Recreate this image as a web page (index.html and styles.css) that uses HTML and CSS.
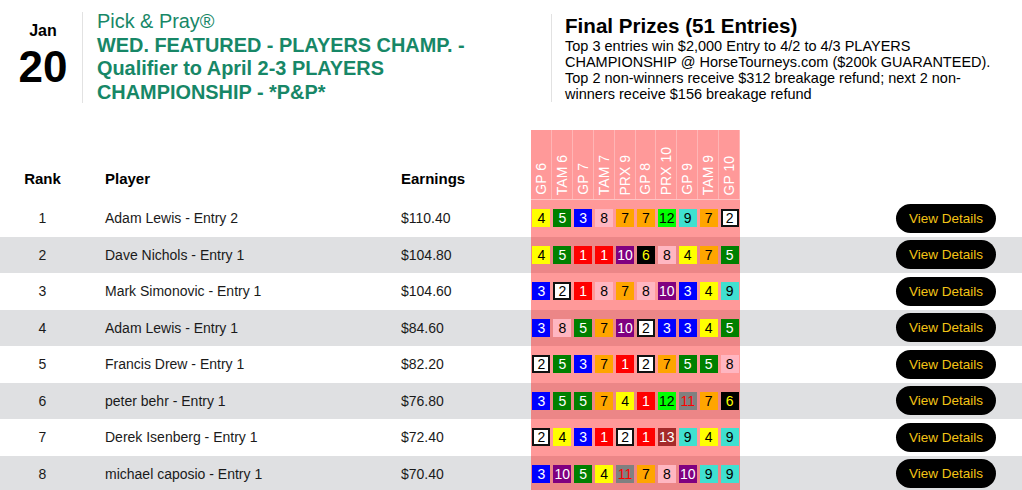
FILE: index.html
```html
<!DOCTYPE html>
<html lang="en">
<head>
<meta charset="utf-8">
<title>Pick &amp; Pray Leaderboard</title>
<link rel="stylesheet" href="styles.css">
</head>
<body>
<header class="top">
  <div class="date">
    <div class="mon">Jan</div>
    <div class="day">20</div>
  </div>
  <div class="title">
    <div class="brand">Pick &amp; Pray®</div>
    <div class="name">WED. FEATURED - PLAYERS CHAMP. - Qualifier to April 2-3 PLAYERS CHAMPIONSHIP - *P&amp;P*</div>
  </div>
  <div class="prizes">
    <h2>Final Prizes (51 Entries)</h2>
    <p>Top 3 entries win $2,000 Entry to 4/2 to 4/3 PLAYERS CHAMPIONSHIP @ HorseTourneys.com ($200k GUARANTEED). Top 2 non-winners receive $312 breakage refund; next 2 non-winners receive $156 breakage refund</p>
  </div>
</header>

<table class="board">
  <colgroup>
    <col class="w-rank"><col class="w-player"><col class="w-earn"><col class="w-picks"><col class="w-act">
  </colgroup>
  <thead>
    <tr>
      <th class="c-rank">Rank</th>
      <th class="c-player">Player</th>
      <th class="c-earn">Earnings</th>
      <th class="c-picks">
        <div class="races">
          <div class="race"><span>GP 6</span></div>
          <div class="race"><span>TAM 6</span></div>
          <div class="race"><span>GP 7</span></div>
          <div class="race"><span>TAM 7</span></div>
          <div class="race"><span>PRX 9</span></div>
          <div class="race"><span>GP 8</span></div>
          <div class="race"><span>PRX 10</span></div>
          <div class="race"><span>GP 9</span></div>
          <div class="race"><span>TAM 9</span></div>
          <div class="race"><span>GP 10</span></div>
        </div>
      </th>
      <th class="c-act"></th>
    </tr>
  </thead>
  <tbody>
    <tr>
      <td class="c-rank">1</td><td class="c-player">Adam Lewis - Entry 2</td><td class="c-earn">$110.40</td>
      <td class="c-picks"><div class="picks"><span class="n4">4</span><span class="n5">5</span><span class="n3">3</span><span class="n8">8</span><span class="n7">7</span><span class="n7">7</span><span class="n12">12</span><span class="n9">9</span><span class="n7">7</span><span class="n2">2</span></div></td>
      <td class="c-act"><button class="btn">View Details</button></td>
    </tr>
    <tr>
      <td class="c-rank">2</td><td class="c-player">Dave Nichols - Entry 1</td><td class="c-earn">$104.80</td>
      <td class="c-picks"><div class="picks"><span class="n4">4</span><span class="n5">5</span><span class="n1">1</span><span class="n1">1</span><span class="n10">10</span><span class="n6">6</span><span class="n8">8</span><span class="n4">4</span><span class="n7">7</span><span class="n5">5</span></div></td>
      <td class="c-act"><button class="btn">View Details</button></td>
    </tr>
    <tr>
      <td class="c-rank">3</td><td class="c-player">Mark Simonovic - Entry 1</td><td class="c-earn">$104.60</td>
      <td class="c-picks"><div class="picks"><span class="n3">3</span><span class="n2">2</span><span class="n1">1</span><span class="n8">8</span><span class="n7">7</span><span class="n8">8</span><span class="n10">10</span><span class="n3">3</span><span class="n4">4</span><span class="n9">9</span></div></td>
      <td class="c-act"><button class="btn">View Details</button></td>
    </tr>
    <tr>
      <td class="c-rank">4</td><td class="c-player">Adam Lewis - Entry 1</td><td class="c-earn">$84.60</td>
      <td class="c-picks"><div class="picks"><span class="n3">3</span><span class="n8">8</span><span class="n5">5</span><span class="n7">7</span><span class="n10">10</span><span class="n2">2</span><span class="n3">3</span><span class="n3">3</span><span class="n4">4</span><span class="n5">5</span></div></td>
      <td class="c-act"><button class="btn">View Details</button></td>
    </tr>
    <tr>
      <td class="c-rank">5</td><td class="c-player">Francis Drew - Entry 1</td><td class="c-earn">$82.20</td>
      <td class="c-picks"><div class="picks"><span class="n2">2</span><span class="n5">5</span><span class="n3">3</span><span class="n7">7</span><span class="n1">1</span><span class="n2">2</span><span class="n7">7</span><span class="n5">5</span><span class="n5">5</span><span class="n8">8</span></div></td>
      <td class="c-act"><button class="btn">View Details</button></td>
    </tr>
    <tr>
      <td class="c-rank">6</td><td class="c-player">peter behr - Entry 1</td><td class="c-earn">$76.80</td>
      <td class="c-picks"><div class="picks"><span class="n3">3</span><span class="n5">5</span><span class="n5">5</span><span class="n7">7</span><span class="n4">4</span><span class="n1">1</span><span class="n12">12</span><span class="n11">11</span><span class="n7">7</span><span class="n6">6</span></div></td>
      <td class="c-act"><button class="btn">View Details</button></td>
    </tr>
    <tr>
      <td class="c-rank">7</td><td class="c-player">Derek Isenberg - Entry 1</td><td class="c-earn">$72.40</td>
      <td class="c-picks"><div class="picks"><span class="n2">2</span><span class="n4">4</span><span class="n3">3</span><span class="n1">1</span><span class="n2">2</span><span class="n1">1</span><span class="n13">13</span><span class="n9">9</span><span class="n4">4</span><span class="n9">9</span></div></td>
      <td class="c-act"><button class="btn">View Details</button></td>
    </tr>
    <tr>
      <td class="c-rank">8</td><td class="c-player">michael caposio - Entry 1</td><td class="c-earn">$70.40</td>
      <td class="c-picks"><div class="picks"><span class="n3">3</span><span class="n10">10</span><span class="n5">5</span><span class="n4">4</span><span class="n11">11</span><span class="n7">7</span><span class="n8">8</span><span class="n10">10</span><span class="n9">9</span><span class="n9">9</span></div></td>
      <td class="c-act"><button class="btn">View Details</button></td>
    </tr>
  </tbody>
</table>
</body>
</html>
```

FILE: styles.css
```css
html, body {
  margin: 0;
  padding: 0;
  background: #fff;
}

body {
  font-family: "Liberation Sans", Arial, Helvetica, sans-serif;
  color: #000;
  width: 1022px;
  overflow: hidden;
}

/* ---------- header ---------- */
.top {
  display: flex;
  align-items: flex-start;
  height: 120px;
  box-sizing: border-box;
  padding-top: 10px;
}

.date {
  flex: 0 0 83px;
  box-sizing: border-box;
  height: 91px;
  margin-top: 2px;
  padding: 10px 0 0 4px;
  border-right: 1px solid #e2e2e2;
  text-align: center;
  font-weight: bold;
}

.mon {
  font-size: 16px;
  line-height: 18px;
  margin-bottom: 5px;
}

.day {
  font-size: 44px;
  line-height: 44px;
}

.title {
  flex: 0 0 468px;
  box-sizing: border-box;
  padding: 0 48px 0 14px;
  color: #178767;
  font-size: 19.9px;
  line-height: 23.7px;
}

.name {
  font-weight: bold;
}

.prizes {
  flex: 0 0 454px;
  box-sizing: border-box;
  margin-top: 4px;
  padding-left: 13px;
  border-left: 1px solid #e2e2e2;
}

.prizes h2 {
  margin: 0;
  font-size: 20.6px;
  line-height: 24px;
  font-weight: bold;
}

.prizes p {
  margin: 0;
  font-size: 14.5px;
  line-height: 16px;
}

/* ---------- table ---------- */
.board {
  width: 1022px;
  margin-top: 10px;
  border-collapse: collapse;
  table-layout: fixed;
}

.w-rank { width: 85px; }
.w-player { width: 296px; }
.w-earn { width: 150px; }
.w-picks { width: 209px; }
.w-act { width: 282px; }

.board th {
  height: 58px;
  padding: 0 0 11px;
  vertical-align: bottom;
  font-size: 15px;
  line-height: 18px;
  font-weight: bold;
  text-align: left;
  border-bottom: 1px solid #fff;
}

.board th.c-rank,
.board td.c-rank {
  text-align: center;
}

.board th.c-player,
.board td.c-player,
.board th.c-earn,
.board td.c-earn {
  padding-left: 20px;
}

.board th.c-picks {
  height: 69px;
  padding: 0;
  background: rgba(255, 0, 0, 0.4);
  border-bottom: 1px solid #ffc4c4;
}

.races {
  display: flex;
  height: 69px;
}

.race {
  flex: 1;
  display: flex;
  justify-content: center;
  align-items: flex-end;
  padding-bottom: 4px;
  border-right: 1px solid rgba(255, 255, 255, 0.28);
}

.race span {
  writing-mode: vertical-rl;
  transform: rotate(180deg);
  color: #fff;
  font-size: 14px;
  font-weight: normal;
  line-height: 16px;
  white-space: nowrap;
}

.board td {
  height: 36.5px;
  padding: 0;
  font-size: 14px;
  color: #1a1a1a;
  vertical-align: middle;
}

.board tbody tr:nth-child(even) {
  background: #dfe0e2;
}

.board td.c-picks {
  background: rgba(255, 0, 0, 0.4);
}

.board td.c-act {
  text-align: right;
  padding-right: 26px;
}

.picks {
  display: grid;
  grid-template-columns: repeat(10, 1fr);
  justify-items: center;
  align-items: center;
}

.picks span {
  display: block;
  width: 18px;
  height: 18px;
  box-sizing: border-box;
  line-height: 18px;
  text-align: center;
  font-size: 14px;
}

.n1 { background: #ff0000; color: #fff; }
.n2 { background: #fff; color: #000; border: 2px solid #111; line-height: 14px !important; }
.n3 { background: #0000ff; color: #fff; }
.n4 { background: #ffff00; color: #000; }
.n5 { background: #008000; color: #fff; }
.n6 { background: #000; color: #ffff00; }
.n7 { background: #ffa500; color: #000; }
.n8 { background: #ffb6c1; color: #000; }
.n9 { background: #40e0d0; color: #000; }
.n10 { background: #800080; color: #fff; }
.n11 { background: #808080; color: #ff0000; }
.n12 { background: #00ff00; color: #000; }
.n13 { background: #a52a2a; color: #fff; }

.btn {
  height: 29px;
  padding: 0 13px;
  border: none;
  border-radius: 15px;
  background: #000;
  color: #f3c316;
  font-family: "Liberation Sans", Arial, sans-serif;
  font-size: 13.5px;
  line-height: 29px;
  cursor: pointer;
}
```
